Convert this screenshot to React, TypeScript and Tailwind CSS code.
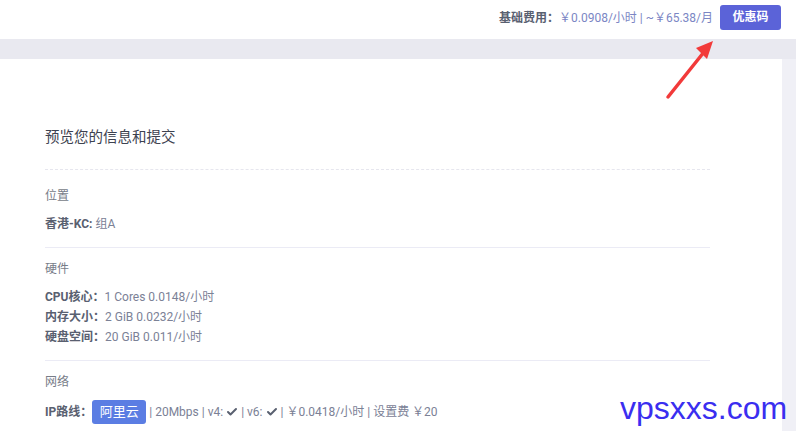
import { Check } from "lucide-react"

const font = { fontFamily: 'Roboto, "Noto Sans CJK SC", sans-serif' }

function Row({ label, value }: { label: string; value: string }) {
  return (
    <div className="h-[20px] leading-[20px] text-[12px]">
      <span className="font-bold text-[#596070]">{label}</span>
      <span className="text-[#7b8196]">{value}</span>
    </div>
  )
}

export default function App() {
  return (
    <div className="relative h-[431px] w-[796px] overflow-hidden bg-[#f0f0f6]" style={font}>
      {/* barra superior */}
      <div className="flex h-[39px] items-center justify-end gap-[7px] bg-white pr-[15px]">
        <div className="mb-[4px] text-[12px]">
          <span className="font-bold text-[#596070]">基础费用：</span>
          <span className="text-[#7b86c4]">￥0.0908/小时 | ~￥65.38/月</span>
        </div>
        <button className="mb-[5px] h-[25px] w-[61px] rounded-[3px] bg-[#5b63d8] text-[12px] font-bold text-white">
          优惠码
        </button>
      </div>
      <div className="h-[20px] bg-[#e9e9f0]" />

      {/* tarjeta */}
      <div className="mr-[14px] h-[372px] bg-white px-[45px] pt-[68px]">
        <div className="w-[665px]">
          <h2 className="text-[14.5px] leading-[22px] text-[#3d4250]">预览您的信息和提交</h2>
          <div className="mt-[20px] border-t border-dashed border-[#e6e6ee]" />

          <div className="pt-[16px] pb-[13px]">
            <div className="mb-[8px] h-[20px] text-[12px] leading-[20px] text-[#777c88]">位置</div>
            <Row label="香港-KC: " value="组A" />
          </div>
          <div className="border-t border-[#ebebf5]" />

          <div className="pt-[11px] pb-[13px]">
            <div className="mb-[8px] h-[20px] text-[12px] leading-[20px] text-[#777c88]">硬件</div>
            <Row label="CPU核心：" value="1 Cores 0.0148/小时" />
            <Row label="内存大小：" value="2 GiB 0.0232/小时" />
            <Row label="硬盘空间：" value="20 GiB 0.011/小时" />
          </div>
          <div className="border-t border-[#ebebf5]" />

          <div className="pt-[11px]">
            <div className="mb-[8px] h-[20px] text-[12px] leading-[20px] text-[#777c88]">网络</div>
            <div className="flex h-[24px] items-center text-[12px] text-[#7b8196]">
              <span className="font-bold text-[#596070]">IP路线：</span>
              <span className="mr-[3px] flex h-[24px] w-[54px] items-center justify-center rounded-[3px] bg-[#5b7de3] text-[13px] text-white">
                阿里云
              </span>
              <span>| 20Mbps | v4:</span>
              <Check className="mx-[3px] h-[12px] w-[12px] text-[#596070]" strokeWidth={4} />
              <span>| v6:</span>
              <Check className="mx-[3px] h-[12px] w-[12px] text-[#596070]" strokeWidth={4} />
              <span>| ￥0.0418/小时 | 设置费 ￥20</span>
            </div>
          </div>
        </div>
      </div>

      {/* flecha roja */}
      <svg className="absolute left-[660px] top-[36px]" width="60" height="66" viewBox="0 0 60 66">
        <path d="M8 61 L44 16" stroke="#f23a3a" strokeWidth="3.5" strokeLinecap="round" />
        <path d="M53 5 L36 12 L47 23 Z" fill="#f23a3a" />
      </svg>

      {/* marca de agua */}
      <div
        className="absolute left-[620px] top-[390px] text-[32px] leading-[36px] text-[#3a2ef0]"
        style={{ fontFamily: '"Liberation Sans", Arial, sans-serif' }}
      >
        vpsxxs.com
      </div>
    </div>
  )
}
